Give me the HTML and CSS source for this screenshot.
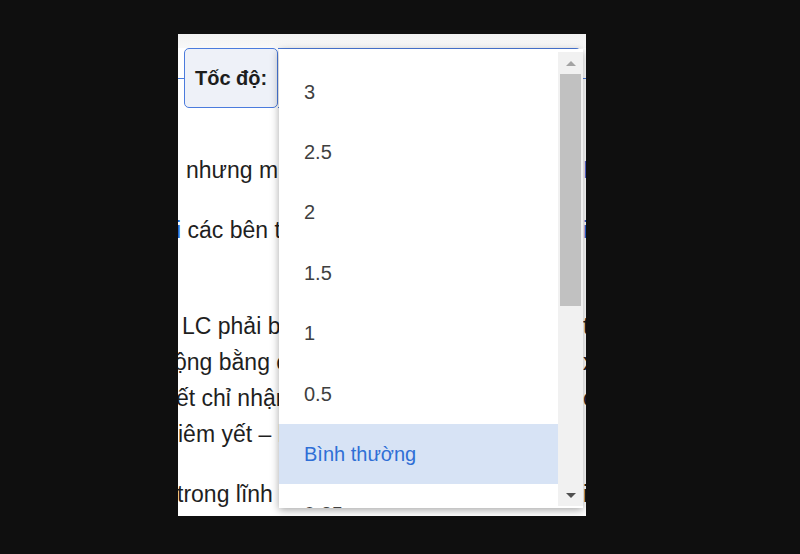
FILE: index.html
```html
<!DOCTYPE html>
<html lang="vi">
<head>
    <meta charset="UTF-8">
    <title>Tốc độ phát</title>
    <link rel="stylesheet" href="styles.css">
</head>
<body>
    <div class="page">
        <!-- thanh chọn tốc độ -->
        <div class="speed-field">
            <label class="speed-label">Tốc độ:</label>
            <div class="speed-select"></div>
        </div>

        <!-- nội dung bài viết phía sau -->
        <div class="article">
            <div class="para">
                <div class="line"><span class="lead pad-8">nhưng mức phí dịch vụ được</span><span class="tail link">N</span></div>
            </div>
            <div class="para para-long">
                <div class="line"><span class="lead cut-2"><span class="link">i</span> các bên tham gia giao dịch</span><span class="tail link">i</span></div>
            </div>
            <div class="para">
                <div class="line"><span class="lead pad-4">LC phải bảo đảm an toàn</span><span class="tail">t</span></div>
                <div class="line"><span class="lead cut-4">ộng bằng cách chuyển khoản</span><span class="tail">x</span></div>
                <div class="line"><span class="lead cut-2">ết chỉ nhận được khi</span><span class="tail">c</span></div>
                <div class="line"><span class="lead">iêm yết – không</span></div>
            </div>
            <div class="para">
                <div class="line"><span class="lead cut-1">trong lĩnh vực tài chính</span><span class="tail">i</span></div>
            </div>
        </div>

        <!-- danh sách tốc độ đang mở -->
        <div class="speed-menu">
            <ul class="speed-options">
                <li>3</li>
                <li>2.5</li>
                <li>2</li>
                <li>1.5</li>
                <li>1</li>
                <li>0.5</li>
                <li class="selected">Bình thường</li>
                <li>0.25</li>
            </ul>
            <div class="menu-scroll">
                <span class="scroll-btn up"></span>
                <span class="scroll-thumb"></span>
                <span class="scroll-btn down"></span>
            </div>
        </div>
    </div>
</body>
</html>
```
FILE: styles.css
```css
* {
    box-sizing: border-box;
}

body {
    margin: 0;
    height: 100vh;
    overflow: hidden;
    background: #0f0f0f;
    font-family: "Liberation Sans", Arial, sans-serif;
}

.page {
    position: relative;
    width: 408px;
    height: 482px;
    margin: 34px 0 0 178px;
    padding-top: 14px;
    background: linear-gradient(#f1f1f1, #f8f8f8 14px, #fff 14px);
    overflow: hidden;
}

/* ô chọn tốc độ */
.speed-field {
    display: flex;
    height: 60px;
    padding: 0 5px 0 6px;
    background: linear-gradient(#4b7bdd, #4b7bdd) 0 30px / 100% 1px no-repeat;
}

.speed-label {
    flex: none;
    display: flex;
    align-items: center;
    width: 94px;
    padding: 0 0 0 10px;
    border: 1px solid #4b7bdd;
    border-radius: 5px;
    background: #eef1f8;
    font-size: 20px;
    font-weight: bold;
    color: #1d1d1d;
    white-space: nowrap;
}

.speed-select {
    flex: 1;
    border: 1px solid #4b7bdd;
    border-left: none;
    border-radius: 0 5px 5px 0;
    background: #fff;
}

/* bài viết */
.article {
    padding-top: 44px;
}

.para {
    margin-bottom: 24px;
    font-size: 23px;
    line-height: 36px;
    color: #1f1f1f;
}

.para-long {
    margin-bottom: 60px;
}

.line {
    display: flex;
    white-space: nowrap;
    overflow: hidden;
}

.lead {
    flex: 1;
    min-width: 0;
    overflow: hidden;
}

.tail {
    flex: none;
    width: 3px;
}

.link {
    color: #2a66d0;
}

.pad-8 { padding-left: 8px; }
.pad-4 { padding-left: 4px; }
.cut-1 { text-indent: -1px; }
.cut-2 { text-indent: -2px; }
.cut-4 { text-indent: -4px; }

/* danh sách thả xuống */
.speed-menu {
    position: absolute;
    left: 101px;
    top: 15px;
    width: 304px;
    height: 459px;
    display: flex;
    background: #fff;
    box-shadow: 0 2px 8px rgba(0, 0, 0, 0.35);
}

.speed-options {
    flex: 1;
    margin: 0;
    padding: 12.6px 0 0;
    list-style: none;
    overflow: hidden;
    font-size: 20px;
    color: #3f3f3f;
}

.speed-options li {
    height: 60.4px;
    line-height: 60.4px;
    padding-left: 25px;
}

.speed-options .selected {
    background: #d7e3f5;
    color: #2f6fd6;
}

.menu-scroll {
    display: flex;
    flex-direction: column;
    width: 25px;
    margin: 3px 0 2px;
    padding: 0 2px;
    background: #f1f1f1;
}

.scroll-btn {
    display: flex;
    align-items: center;
    justify-content: center;
    height: 22px;
}

.scroll-btn::before {
    content: "";
    border-left: 5px solid transparent;
    border-right: 5px solid transparent;
}

.scroll-btn.up::before {
    border-bottom: 5px solid #a3a3a3;
}

.scroll-btn.down {
    margin-top: auto;
}

.scroll-btn.down::before {
    border-top: 5px solid #505050;
}

.scroll-thumb {
    height: 232px;
    background: #c1c1c1;
}
```
